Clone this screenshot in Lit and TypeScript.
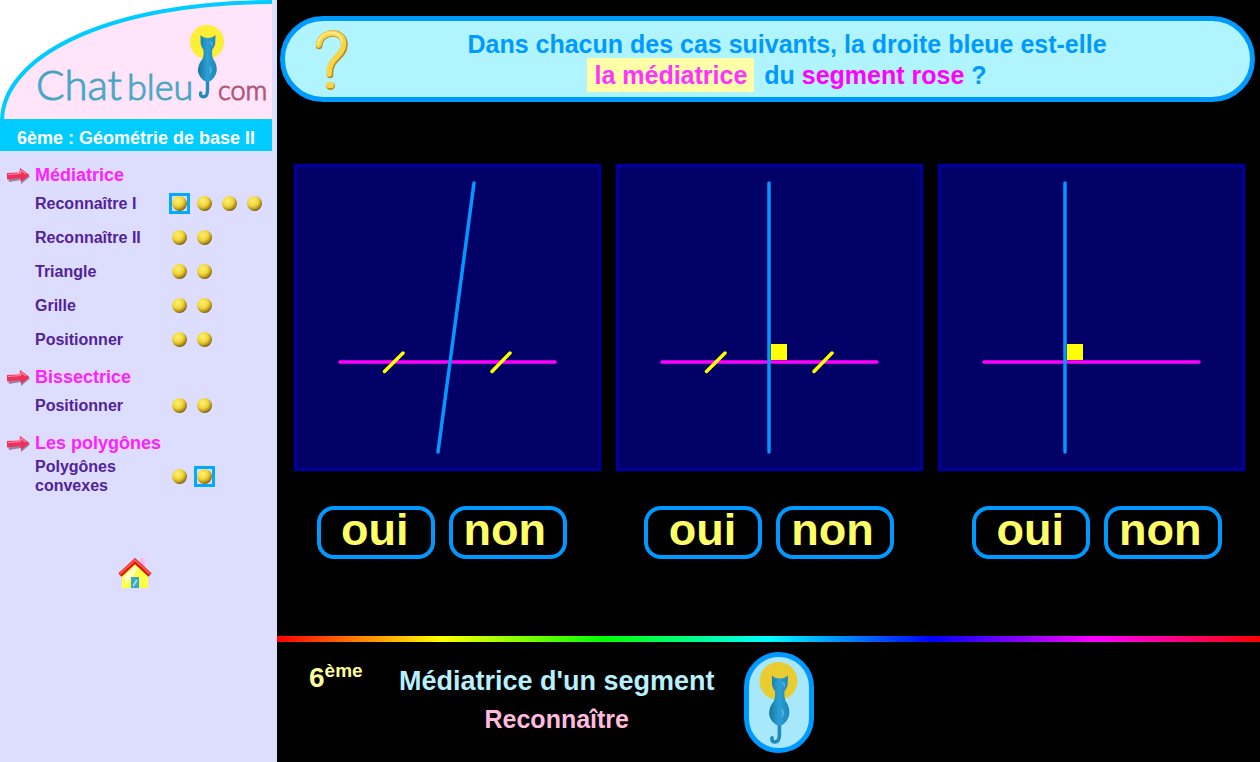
import { LitElement, html, css, svg } from "lit";
import { customElement } from "lit/decorators.js";
import { classMap } from "lit/directives/class-map.js";

interface Lesson {
  label: string;
  dots: number;
  selected?: number;
}

interface Chapter {
  title: string;
  lessons: Lesson[];
}

interface Figure {
  top: number;
  bottom: number;
  ticks: boolean;
  square: boolean;
  alt: string;
}

const CHAPTERS: Chapter[] = [
  {
    title: "Médiatrice",
    lessons: [
      { label: "Reconnaître I", dots: 4, selected: 0 },
      { label: "Reconnaître II", dots: 2 },
      { label: "Triangle", dots: 2 },
      { label: "Grille", dots: 2 },
      { label: "Positionner", dots: 2 },
    ],
  },
  { title: "Bissectrice", lessons: [{ label: "Positionner", dots: 2 }] },
  { title: "Les polygônes", lessons: [{ label: "Polygônes convexes", dots: 2, selected: 1 }] },
];

// x of both ends of the blue line, and which markings the figure carries
const FIGURES: Figure[] = [
  { top: 180, bottom: 144, ticks: true, square: false, alt: "Droite oblique passant par le milieu" },
  { top: 153, bottom: 153, ticks: true, square: true, alt: "Droite perpendiculaire passant par le milieu" },
  { top: 127, bottom: 127, ticks: false, square: true, alt: "Droite perpendiculaire" },
];

// The seated cat, head at the top and tail curling to the left
const cat = svg`
  <path d="M17.500 46 V57 Q17.500 64 13 63.800 Q10 63.500 10.700 60" fill="none" stroke="#1f8cbe"
    stroke-width="3.400" stroke-linecap="round"/>
  <path d="M10.500 2 Q13 5 17.800 5 Q22.500 5 25.500 2 L25.200 11 Q24 14.500 22.200 17 Q21.500 22 23.200 26
    Q27 31 26.700 38 Q25.500 45 19.500 48.500 H15.500 Q9 45 7.900 38 Q8 31 12.500 26 Q14.200 22 13.500 17
    Q11.500 14.500 10.700 11 Z" fill="url(#fur)"/>
  <path d="M20 9 Q22.500 9.500 22 12 M20 34 Q22 37 20 40" fill="none" stroke="#7ad0f0" stroke-width="1.500"
    stroke-linecap="round" opacity=".55"/>`;

const fur = svg`<linearGradient id="fur" x1="0" x2="1">
  <stop offset="0" stop-color="#17749f"/><stop offset=".5" stop-color="#2ba0d4"/><stop offset="1" stop-color="#1e86b8"/>
</linearGradient>`;

@customElement("app-root")
export class AppRoot extends LitElement {
  static styles = css`
    :host {
      display: grid;
      grid-template-columns: 277px 1fr;
      min-height: 100vh;
      background: #000;
      font-family: "Liberation Sans", Arial, sans-serif;
      font-weight: bold;
    }
    * { box-sizing: border-box; }
    svg { display: block; overflow: visible; }
    h1, h2, p, ul { margin: 0; padding: 0; font-size: inherit; }
    ul { list-style: none; }

    .side { background: #ddddff; }
    .brand { width: 272px; }
    .logo { overflow: hidden; }
    .course {
      background: #00ccff;
      color: #fff;
      font-size: 18px;
      line-height: 32px;
      padding-top: 3px;
      height: 32px;
      text-align: center;
      white-space: nowrap;
    }
    .chapters { display: grid; gap: 9px; padding-top: 12px; }
    .chapter {
      display: flex;
      align-items: center;
      gap: 5px;
      padding: 2px 0 0 6px;
      font-size: 18px;
      line-height: 21px;
      color: #ff22ff;
    }
    .lesson {
      display: grid;
      grid-template-columns: 134px auto;
      align-items: center;
      min-height: 34px;
      padding: 3px 0 3px 35px;
      font-size: 16px;
      line-height: 19px;
      color: #522299;
    }
    .label { padding-right: 40px; }
    .label.short { padding-right: 0; }
    .dots { display: flex; gap: 4px; }
    .dot {
      display: grid;
      place-items: center;
      width: 21px;
      height: 21px;
      border: 3px solid transparent;
    }
    .dot.on { border-color: #00aaff; }
    .ball { width: 15px; height: 15px; }
    .home { display: block; width: 34px; margin: 59px 0 0 118px; }

    .main { display: flex; flex-direction: column; }
    .banner {
      display: flex;
      align-items: center;
      margin: 16px 5px 0 3px;
      padding: 8px 27px 6px 28px;
      min-height: 85px;
      border: 5px solid #0099ff;
      border-radius: 43px;
      background: #b0f4ff;
      color: #0099ff;
    }
    .ask { flex: 1; text-align: center; font-size: 25px; line-height: 31px; }
    .mark { background: #ffffa8; color: #ff33ff; padding: 3px 7px; margin-right: 3px; }
    .pink { color: #ff00ff; }

    .figures {
      display: grid;
      grid-template-columns: repeat(3, 1fr);
      gap: 15px;
      margin: 62px 15px 0 17px;
    }
    .figure { width: 100%; }

    .answers { display: grid; grid-template-columns: repeat(3, 1fr); margin-top: 35px; }
    .pair { display: flex; justify-content: center; gap: 14px; padding-left: 2px; }
    .answer {
      width: 118px;
      height: 53px;
      padding: 0 2px 6px 0;
      border: 4px solid #0099ff;
      border-radius: 17px;
      background: #000;
      color: #ffff66;
      font: bold 45px/40px "Liberation Sans", Arial, sans-serif;
    }
    .answer.no { padding: 0 6px 10px 0; }

    .rainbow {
      height: 6px;
      margin-top: 77px;
      background: linear-gradient(90deg, #f00, #ff0, #0f0, #0ff, #00f, #f0f, #f00);
    }
    .foot { display: flex; align-items: center; padding: 10px 32px 9px; }
    .level { align-self: flex-start; padding-top: 7px; width: 90px; color: #ffff99; font-size: 28px; line-height: 38px; }
    .level sup { font-size: 19px; line-height: 0; }
    .titles { text-align: center; line-height: 38px; padding-bottom: 6px; }
    .topic { font-size: 27px; color: #b8f0ff; }
    .kind { font-size: 25px; color: #ffbbdd; }
    .badge {
      display: grid;
      place-items: center;
      width: 70px;
      height: 101px;
      margin-left: 30px;
      border: 5px solid #0099ff;
      border-radius: 35px;
      background: #a8e8fc;
    }
  `;

  private logo() {
    return html`<svg class="logo" width="272" height="119" viewBox="0 0 272 119" role="img" aria-label="Chat bleu .com">
      <defs>
        ${fur}
        <linearGradient id="ink" x1="0" y1="0" x2="0" y2="1">
          <stop offset="0" stop-color="#4f8098" /><stop offset=".6" stop-color="#48b4d8" /><stop offset="1" stop-color="#3a93b8" />
        </linearGradient>
      </defs>
      <rect width="272" height="119" fill="#fff" />
      <path d="M2 119 C2 62 100 2 272 2 V119Z" fill="#ffe4fa" />
      <path d="M2 121 C2 58 104 2 274 2" fill="none" stroke="#00ccff" stroke-width="4" />
      <g font-family="Lato" font-weight="300" stroke-width="1">
        <text x="36" y="100" font-size="42" fill="url(#ink)" stroke="#4aa6c6">Chat</text>
        <text x="127" y="100" font-size="36" fill="url(#ink)" stroke="#4aa6c6">bleu</text>
        <text x="218" y="100" font-size="27" fill="#b05878" stroke="#b05878">com</text>
      </g>
      <circle cx="207" cy="42" r="17" fill="#ffee33" />
      <g transform="translate(190 33)">${cat}</g>
    </svg>`;
  }

  private arrow() {
    return html`<svg width="24" height="18" viewBox="0 0 24 18" aria-hidden="true">
      <path d="M2 9 L14 8.500 L14 4 L24 9.500 L15 17 L15 13 L3 15Z" fill="#8a6a86" opacity=".8" />
      <path d="M1 6 L13.500 5.500 L14 1 L23.500 8 L15 15 L14.500 11 L1 12.500Z" fill="#ee305a" />
      <path d="M2 7.500 L14.500 6.500 L15 3.500 L20 7" fill="none" stroke="#ff86a4" stroke-width="1.200" />
    </svg>`;
  }

  private ball() {
    return html`<svg class="ball" viewBox="0 0 15 15" aria-hidden="true">
      <defs>
        <radialGradient id="gold" cx=".38" cy=".32" r=".75">
          <stop offset="0" stop-color="#fff070" /><stop offset=".48" stop-color="#f0d63c" />
          <stop offset=".76" stop-color="#b89418" /><stop offset="1" stop-color="#5e3c08" />
        </radialGradient>
      </defs>
      <circle cx="7.500" cy="7.500" r="7.500" fill="url(#gold)" />
    </svg>`;
  }

  private house() {
    return html`<svg width="34" height="32" viewBox="0 0 34 32" aria-hidden="true">
      <rect x="22" y="1" width="5" height="10" fill="#ffb8f0" />
      <path d="M4 17 L17 5 L30 17 V31 H4Z" fill="#ffff44" />
      <path d="M6 20 L17 9 L20 12 L8 27Z" fill="#ffffc8" />
      <rect x="13" y="20" width="8" height="11" fill="#38a8c8" />
      <path d="M15 29 L19 23" stroke="#90e0f0" stroke-width="2" />
      <path d="M2 18 L17 4 L32 18" fill="none" stroke="#d81010" stroke-width="4.500" />
      <path d="M2 17 L17 3 L32 17" fill="none" stroke="#ff5a40" stroke-width="2" />
    </svg>`;
  }

  private figure(f: Figure) {
    const foot = f.top + ((f.bottom - f.top) * 179) / 269;
    return html`<svg class="figure" viewBox="0 0 307 307" role="img" aria-label=${f.alt}>
      <rect x="1.500" y="1.500" width="304" height="304" fill="#000066" stroke="#000099" stroke-width="3.500" />
      <g stroke-width="3.500" stroke-linecap="round">
        <line x1="46" y1="198" x2="261" y2="198" stroke="#ff00ff" />
        <line x1=${f.top} y1="19" x2=${f.bottom} y2="288" stroke="#0099ff" />
        ${f.square ? svg`<rect x=${foot + 2} y="180" width="16" height="16" fill="#ffff00" />` : null}
        ${f.ticks
          ? svg`<path d="M90.500 207.500 L109 189 M198 207.500 L216 189" stroke="#ffff00" />`
          : null}
      </g>
    </svg>`;
  }

  private lesson(l: Lesson) {
    return html`<li class="lesson">
      <span class=${classMap({ label: true, short: l.label.length < 16 })}>${l.label}</span>
      <span class="dots">
        ${Array.from(
          { length: l.dots },
          (_, i) => html`<a
            href="#"
            class=${classMap({ dot: true, on: l.selected === i })}
            aria-label="${l.label}, exercice ${i + 1}"
            >${this.ball()}</a
          >`,
        )}
      </span>
    </li>`;
  }

  render() {
    return html`
      <aside class="side">
        <div class="brand">
          ${this.logo()}
          <p class="course">6ème : Géométrie de base II</p>
        </div>
        <nav class="chapters">
          ${CHAPTERS.map(
            (c) => html`<section>
              <h2 class="chapter">${this.arrow()}${c.title}</h2>
              <ul>${c.lessons.map((l) => this.lesson(l))}</ul>
            </section>`,
          )}
        </nav>
        <a class="home" href="#" aria-label="Accueil">${this.house()}</a>
      </aside>
      <main class="main">
        <header class="banner">
          <svg width="38" height="62" viewBox="0 0 38 62" aria-hidden="true">
            <g fill="none" stroke-linecap="round">
              <path d="M6 17 C7 1 32 0 31.500 16 C31 29 16.500 28 17 46" stroke="#b88a20" stroke-width="6.500" />
              <path d="M5.500 16 C7 1 31 0 30.500 15 C30 28 15.500 28 16 45" stroke="#f8d448" stroke-width="5.500" />
              <path d="M5 15 C7 1 28 0 29 13" stroke="#fff2a0" stroke-width="1.500" />
            </g>
            <ellipse cx="17.500" cy="57" rx="4.500" ry="4" fill="#b88a20" />
            <ellipse cx="17" cy="56" rx="4" ry="3.300" fill="#f8d448" />
          </svg>
          <h1 class="ask">
            Dans chacun des cas suivants, la droite bleue est-elle<br />
            <span class="mark">la médiatrice</span> du <span class="pink">segment rose</span> ?
          </h1>
        </header>
        <div class="figures">${FIGURES.map((f) => this.figure(f))}</div>
        <div class="answers">
          ${FIGURES.map(
            () => html`<div class="pair">
              <button class="answer" type="button">oui</button>
              <button class="answer no" type="button">non</button>
            </div>`,
          )}
        </div>
        <div class="rainbow"></div>
        <footer class="foot">
          <p class="level">6<sup>ème</sup></p>
          <div class="titles">
            <p class="topic">Médiatrice d'un segment</p>
            <p class="kind">Reconnaître</p>
          </div>
          <div class="badge">
            <svg width="50" height="86" viewBox="0 0 50 86" aria-hidden="true">
              <defs>${fur}</defs>
              <circle cx="24.500" cy="21" r="19" fill="#e8cc30" />
              <g transform="translate(6.500 13) scale(1.080)">${cat}</g>
            </svg>
          </div>
        </footer>
      </main>
    `;
  }
}
